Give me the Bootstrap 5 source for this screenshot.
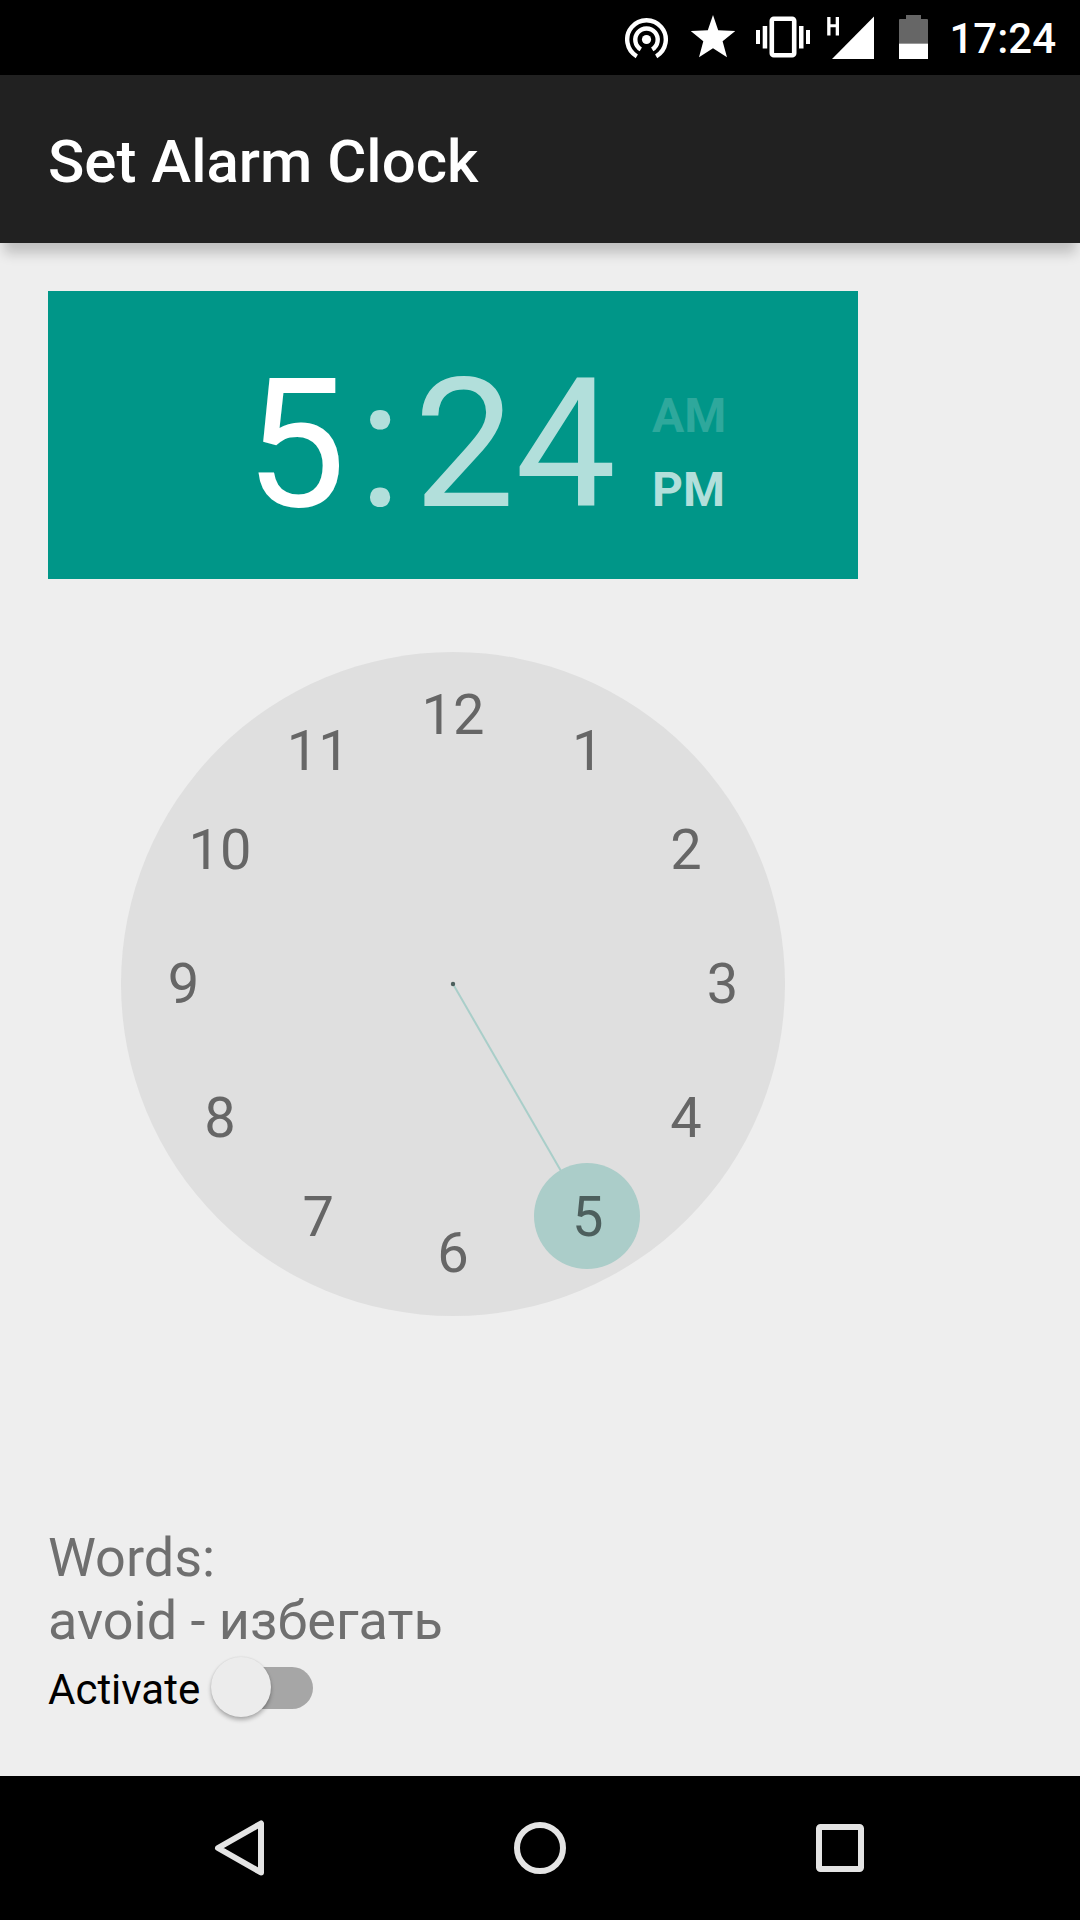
<!DOCTYPE html>
<html lang="en">
<head>
<meta charset="utf-8">
<meta name="viewport" content="width=device-width, initial-scale=1">
<title>Set Alarm Clock</title>
<link href="https://cdn.jsdelivr.net/npm/bootstrap@5.3.0/dist/css/bootstrap.min.css" rel="stylesheet">
<style>
  body { font-family: Roboto, "Noto Sans", sans-serif; background: #eee; color: #000; }
  button { background: none; border: 0; padding: 0; color: inherit; font-weight: inherit; }

  .status-bar { gap: 16px; padding-right: 24px; height: 75px; background: #000; color: #fff; }
  .status-time { padding-top: 3px; font-size: 42px; font-weight: 500; line-height: 48px; }

  .app-bar { padding: 51px 48px 45px; background: #212121; box-shadow: 0 14px 12px -4px rgba(0, 0, 0, .2); }
  .app-title { font-size: 60px; font-weight: 500; line-height: 72px; }

  .screen { padding: 48px 48px 59px; }
  .picker { width: 100%; max-width: 810px; }
  .picker-head { padding: 64px 24px 44px 197px; background: #009688; color: #b2dfdb; }
  .digits { font-size: 180px; line-height: 180px; gap: 12px; }
  .half-day { font-size: 48px; font-weight: 700; line-height: 74px; margin-left: 36px; }
  .half-off { color: #2ea89c; }

  .dial { width: 82%; max-width: 664px; margin-top: 73px; aspect-ratio: 1; }
  .dial button {
    position: absolute; width: 106px; height: 106px; margin: -53px 0 0 -53px;
    font-size: 56px; line-height: 106px; color: #666; text-align: center;
  }
  .at-12 { left: 50%;    top: 9.5%; }
  .at-1  { left: 70.3%;  top: 14.9%; }
  .at-2  { left: 85.1%;  top: 29.8%; }
  .at-3  { left: 90.6%;  top: 50%; }
  .at-4  { left: 85.1%;  top: 70.2%; }
  .at-5  { left: 70.3%;  top: 85.1%; }
  .at-6  { left: 50%;    top: 90.5%; }
  .at-7  { left: 29.7%;  top: 85.1%; }
  .at-8  { left: 14.9%;  top: 70.2%; }
  .at-9  { left: 9.4%;   top: 50%; }
  .at-10 { left: 14.9%;  top: 29.8%; }
  .at-11 { left: 29.7%;  top: 14.9%; }
  .dial .hour-on { color: #4d5f5d; }

  .words { font-size: 54px; line-height: 63px; color: #6f6f6f; }
  .activate { gap: 11px; margin-top: 5px; font-size: 42px; line-height: 54px; }
  .activate label { padding-top: 6px; }
  .toggle { appearance: none; position: relative; width: 102px; height: 60px; margin: 0; }
  .toggle::before {
    content: ""; position: absolute; left: 18px; right: 0; top: 10px; height: 42px;
    border-radius: 21px; background: #a6a6a6;
  }
  .toggle::after {
    content: ""; position: absolute; left: 0; top: 0; width: 60px; height: 60px;
    border-radius: 50%; background: #ececec; box-shadow: 0 3px 4px rgba(0, 0, 0, .28), 0 0 2px rgba(0, 0, 0, .1);
  }
  .toggle:checked::after { left: 42px; background: #009688; }

  .nav-keys { background: #000; }
  .nav-keys button { height: 144px; }
</style>
<script src="https://cdn.jsdelivr.net/npm/bootstrap@5.3.0/dist/js/bootstrap.bundle.min.js"></script>
</head>
<body class="d-flex flex-column min-vh-100">

<div class="status-bar d-flex align-items-center justify-content-end">
  <svg width="50" height="75" viewBox="625 0 50 75" fill="none" stroke="#fff" stroke-width="4.4" aria-label="Hotspot">
    <circle cx="646.5" cy="39.5" r="4.6" fill="#fff" stroke="none"/>
    <path d="M640.8 49.3A11.2 11.2 0 1 1 652.2 49.3"/>
    <path d="M636.8 56.3A19.3 19.3 0 1 1 656.2 56.3"/>
  </svg>
  <svg width="49" height="75" viewBox="691 0 49 75" fill="#fff" aria-label="Starred">
    <path d="M713 15L718.2 30.2L735.3 31L722.6 41.3L727 57.3L713 48.2L699 57.3L703.3 41.3L690.8 31L707.8 30.2Z"/>
  </svg>
  <svg width="55" height="75" viewBox="756 0 55 75" fill="#fff" aria-label="Vibrate">
    <rect x="771.8" y="18.8" width="22.4" height="36.4" rx="2" fill="none" stroke="#fff" stroke-width="4.6"/>
    <path d="M756 30h4v14h-4zM762.7 26h4.5v22.500h-4.500zM799 26h4.500v22.500h-4.500zM806 30h4v14h-4z"/>
  </svg>
  <svg width="56" height="75" viewBox="827 0 56 75" fill="#fff" aria-label="Mobile signal, H">
    <path d="M832 59L874 16.500V59z"/>
    <path d="M827.200 17h3.300v7.300h5.200V17h3.300v18.500h-3.300v-8.200h-5.200v8.200h-3.300z"/>
  </svg>
  <svg width="34" height="75" viewBox="899 0 34 75" aria-label="Battery">
    <path d="M899 43.500V20q0-1 1-1h6v-4h15v4h6q1 0 1 1v23.500z" fill="#666"/>
    <path d="M899 43.500h29V59h-29z" fill="#fff"/>
  </svg>
  <span class="status-time">17:24</span>
</div>

<header class="app-bar">
  <h1 class="app-title text-white m-0">Set Alarm Clock</h1>
</header>

<main class="screen flex-grow-1 d-flex flex-column">
  <section class="picker" aria-label="Time picker">
    <div class="picker-head d-flex align-items-end">
      <div class="digits d-flex">
        <button type="button" class="text-white">5</button>
        <span>:</span>
        <button type="button">24</button>
      </div>
      <div class="half-day d-flex flex-column align-items-start pb-2">
        <button type="button" class="half-off">AM</button>
        <button type="button" aria-pressed="true">PM</button>
      </div>
    </div>
    <div class="dial position-relative mx-auto">
      <svg class="d-block w-100 h-100" viewBox="0 0 664 664" aria-hidden="true">
        <circle cx="332" cy="332" r="332" fill="#dfdfdf"/>
        <path d="M332 332L440 519" stroke="#a9cec9" stroke-width="2"/>
        <circle cx="466" cy="564" r="53" fill="#abcdc9"/>
        <circle cx="332" cy="332" r="2.200" fill="#4d5f5d"/>
      </svg>
      <button type="button" class="at-12">12</button>
      <button type="button" class="at-1">1</button>
      <button type="button" class="at-2">2</button>
      <button type="button" class="at-3">3</button>
      <button type="button" class="at-4">4</button>
      <button type="button" class="at-5 hour-on" aria-pressed="true">5</button>
      <button type="button" class="at-6">6</button>
      <button type="button" class="at-7">7</button>
      <button type="button" class="at-8">8</button>
      <button type="button" class="at-9">9</button>
      <button type="button" class="at-10">10</button>
      <button type="button" class="at-11">11</button>
    </div>
  </section>

  <section class="mt-auto">
    <p class="words m-0">Words:<br>avoid - избегать</p>
    <div class="activate d-flex align-items-center">
      <label for="activate">Activate</label>
      <input class="toggle" type="checkbox" role="switch" id="activate">
    </div>
  </section>
</main>

<nav class="nav-keys" aria-label="System">
  <div class="row g-0 justify-content-center">
    <div class="col-10 d-flex">
      <button type="button" class="col-4" aria-label="Back">
        <svg width="60" height="60" viewBox="0 0 60 60" fill="none" stroke="#e4e4e4" stroke-width="6" stroke-linejoin="round"><path d="M51 5.500V54.500L8 30Z"/></svg>
      </button>
      <button type="button" class="col-4" aria-label="Home">
        <svg width="60" height="60" viewBox="0 0 60 60" fill="none" stroke="#e4e4e4" stroke-width="6"><circle cx="30" cy="30" r="23"/></svg>
      </button>
      <button type="button" class="col-4" aria-label="Recent apps">
        <svg width="60" height="60" viewBox="0 0 60 60" fill="none" stroke="#e4e4e4" stroke-width="6"><rect x="9" y="9" width="42" height="42" rx="1.500"/></svg>
      </button>
    </div>
  </div>
</nav>
</body>
</html>
